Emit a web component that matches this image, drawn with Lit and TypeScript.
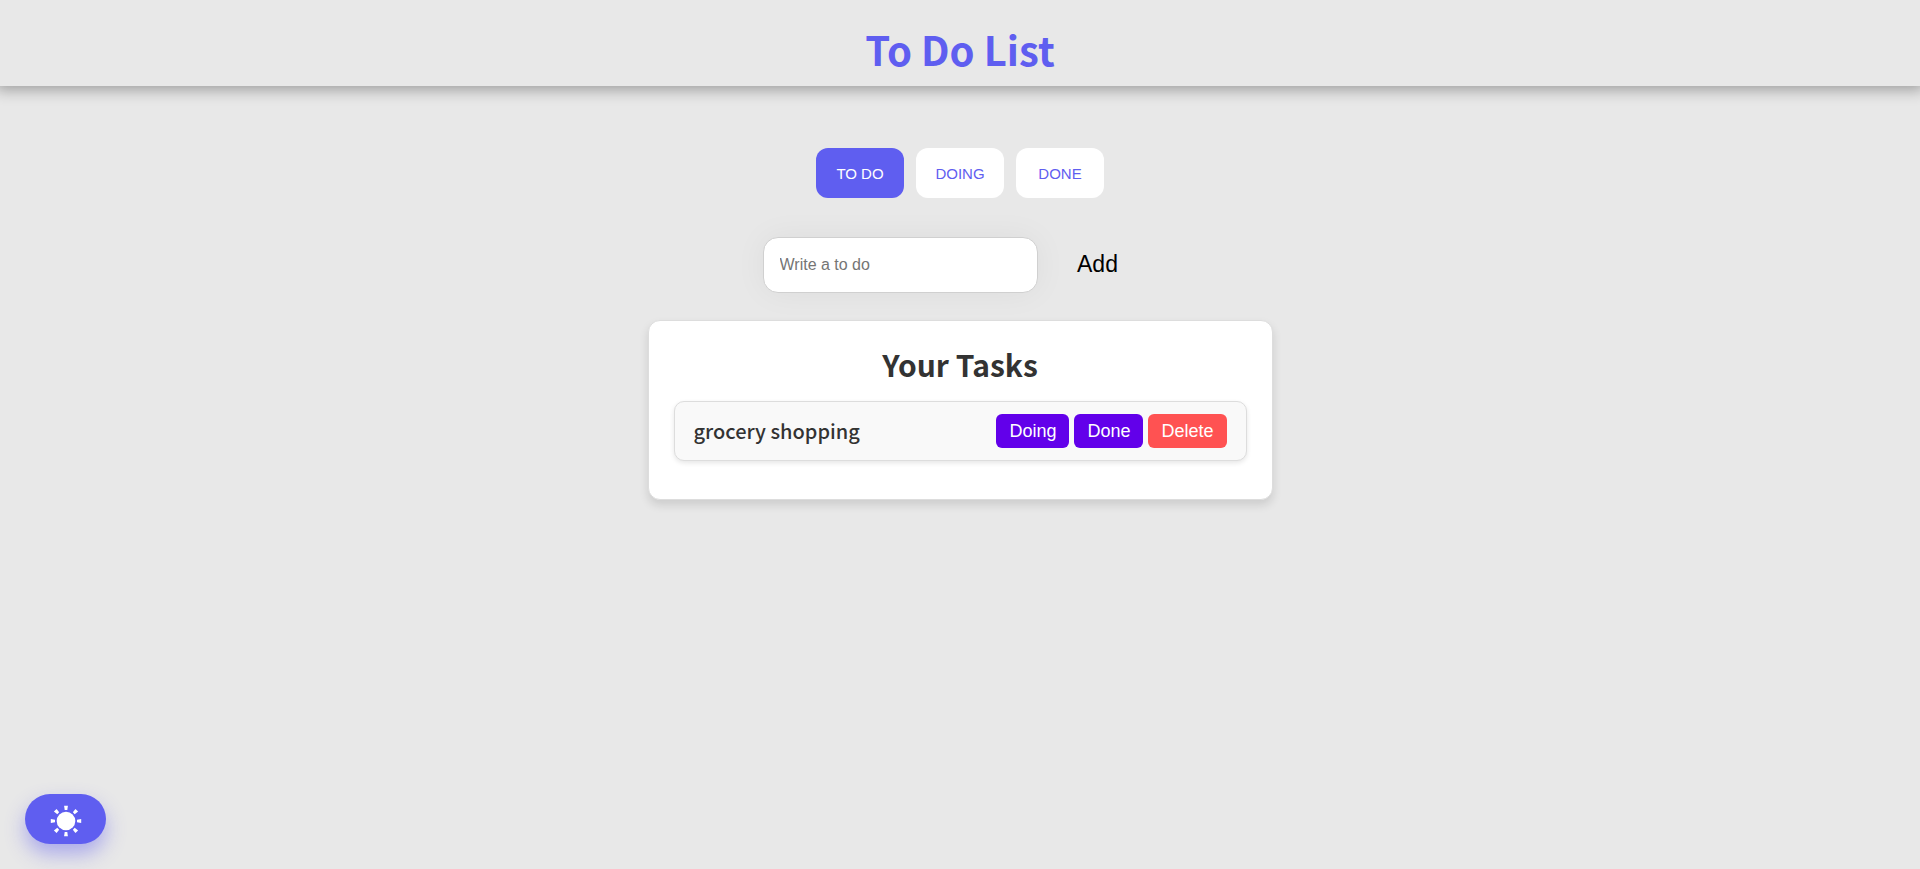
import { LitElement, html, svg, css } from "lit";
import { customElement, state } from "lit/decorators.js";
import { classMap } from "lit/directives/class-map.js";

type Status = "To do" | "Doing" | "Done";

interface Task {
  id: number;
  text: string;
  status: Status;
}

const STATUSES: Status[] = ["To do", "Doing", "Done"];
const RAY_ANGLES = [0, 45, 90, 135, 180, 225, 270, 315];

@customElement("app-root")
export class AppRoot extends LitElement {
  static styles = css`
    :host {
      display: block;
      box-sizing: border-box;
      min-height: 100vh;
      background: #e8e8e8;
      color: #333;
      font-family: "Noto Sans CJK SC", "Noto Sans", sans-serif;
    }
    *,
    *::before {
      box-sizing: border-box;
    }
    h1,
    h2,
    ul {
      margin: 0;
      padding: 0;
    }
    button,
    input {
      font-family: "Liberation Sans", Arial, sans-serif;
    }
    button {
      border: none;
      cursor: pointer;
    }
    .header {
      padding: 19px 0 7px;
      text-align: center;
      box-shadow: 0 0 14px 4px rgba(0, 0, 0, 0.32);
    }
    .title {
      color: #5f5ef0;
      font-size: 40px;
      line-height: 60px;
      font-weight: 700;
    }
    .main {
      display: flex;
      flex-direction: column;
      align-items: center;
      padding: 62px 20px 100px;
    }
    .tabs {
      display: flex;
      gap: 12px;
    }
    .tab {
      width: 88px;
      height: 50px;
      padding: 0;
      border-radius: 12px;
      background: #fff;
      color: #5f5ef0;
      font-size: 15px;
      text-transform: uppercase;
    }
    .tab.active {
      background: #5f5ef0;
      color: #fff;
    }
    .form {
      display: flex;
      align-items: center;
      margin: 39px 0 27px;
    }
    .field {
      width: 275px;
      height: 56px;
      padding: 0 16px;
      border: 1px solid #d0d0d0;
      border-radius: 15px;
      background: #fff;
      font-size: 16px;
      box-shadow: 0 0 32px rgba(0, 0, 0, 0.05);
      outline: none;
    }
    .field::placeholder {
      color: #757575;
    }
    .add {
      width: 120px;
      height: 50px;
      padding: 0 0 2px;
      background: transparent;
      color: #000;
      font-size: 23px;
    }
    .card {
      width: 100%;
      max-width: 625px;
      padding: 22px 25px 38px;
      border: 1px solid #ddd;
      border-radius: 12px;
      background: #fff;
      box-shadow: 0 5px 10px rgba(0, 0, 0, 0.12);
    }
    .heading {
      margin-bottom: 16px;
      text-align: center;
      font-size: 30px;
      line-height: 42px;
      font-weight: 700;
    }
    .task {
      display: flex;
      align-items: center;
      justify-content: space-between;
      min-height: 60px;
      padding: 12px 19px;
      border: 1px solid #ddd;
      border-radius: 10px;
      background: #f9f9f9;
      box-shadow: 0 2px 5px rgba(0, 0, 0, 0.1);
      list-style: none;
    }
    .text {
      font-size: 20px;
      line-height: 32px;
      font-weight: 500;
    }
    .actions {
      display: flex;
      gap: 5px;
    }
    .action {
      height: 34px;
      padding: 0 13px;
      border-radius: 6px;
      background: #6200ea;
      color: #fff;
      font-size: 18px;
    }
    .action.delete {
      background: #ff5252;
    }
    .theme {
      position: fixed;
      left: 25px;
      bottom: 25px;
      display: grid;
      place-items: center;
      width: 81px;
      height: 50px;
      padding: 4px 0 0;
      border-radius: 25px;
      background: #5f5ef0;
      box-shadow: 0 10px 20px rgba(95, 94, 240, 0.45);
    }
    .sun {
      display: block;
      width: 32px;
      height: 32px;
    }
  `;

  @state() private filter: Status = "To do";
  @state() private tasks: Task[] = [
    { id: 1, text: "grocery shopping", status: "To do" },
  ];

  private add(event: Event) {
    event.preventDefault();
    const form = event.target as HTMLFormElement;
    const field = form.elements.namedItem("task") as HTMLInputElement;
    const text = field.value.trim();
    if (!text) return;
    this.tasks = [...this.tasks, { id: Date.now(), text, status: "To do" }];
    form.reset();
  }

  private move(id: number, status: Status) {
    this.tasks = this.tasks.map((t) => (t.id === id ? { ...t, status } : t));
  }

  private remove(id: number) {
    this.tasks = this.tasks.filter((t) => t.id !== id);
  }

  private renderTask(task: Task) {
    return html`
      <li class="task">
        <span class="text">${task.text}</span>
        <div class="actions">
          ${STATUSES.filter((s) => s !== task.status).map(
            (s) => html`<button class="action" type="button" @click=${() => this.move(task.id, s)}>${s}</button>`
          )}
          <button class="action delete" type="button" @click=${() => this.remove(task.id)}>Delete</button>
        </div>
      </li>
    `;
  }

  render() {
    return html`
      <header class="header"><h1 class="title">To Do List</h1></header>
      <main class="main">
        <nav class="tabs">
          ${STATUSES.map(
            (s) => html`<button
              class=${classMap({ tab: true, active: s === this.filter })}
              type="button"
              @click=${() => (this.filter = s)}
            >${s}</button>`
          )}
        </nav>
        <form class="form" @submit=${this.add}>
          <input class="field" name="task" type="text" placeholder="Write a to do" aria-label="Write a to do" autocomplete="off" />
          <button class="add" type="submit">Add</button>
        </form>
        <section class="card">
          <h2 class="heading">Your Tasks</h2>
          <ul>
            ${this.tasks.filter((t) => t.status === this.filter).map((t) => this.renderTask(t))}
          </ul>
        </section>
      </main>
      <button class="theme" type="button" aria-label="Toggle theme">
        <svg class="sun" viewBox="-16 -16 32 32" fill="#fff" aria-hidden="true">
          <circle r="9.3" />
          ${RAY_ANGLES.map(
            (a) => svg`<path d="M11 -1.3 L15.2 -1.9 V1.9 L11 1.3 Z" transform="rotate(${a})" />`
          )}
        </svg>
      </button>
    `;
  }
}
